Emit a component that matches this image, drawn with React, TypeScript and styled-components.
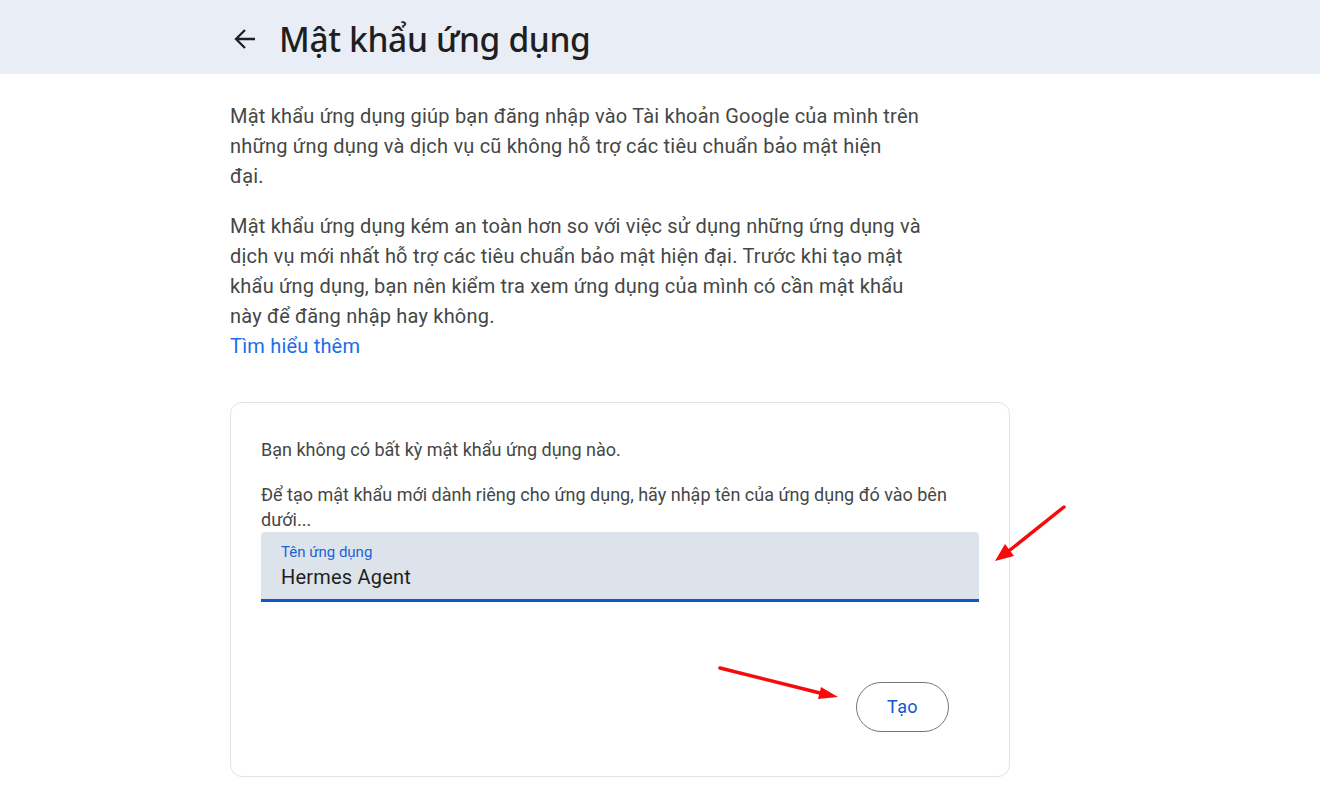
import styled, { createGlobalStyle } from "styled-components";

const GlobalStyle = createGlobalStyle`
  html, body {
    margin: 0;
    padding: 0;
    height: 100%;
    overflow: hidden;
    background: #fff;
    font-family: Roboto, "Liberation Sans", sans-serif;
  }
`;

const App = () => {
  return (
    <Page>
      <GlobalStyle />
      <Header>
        <BackButton aria-label="Quay lại">
          <svg width="30" height="30" viewBox="0 0 30 30" fill="none" stroke="#202124" strokeWidth="2.3">
            <path d="M25 15H7M15 6l-9 9 9 9" />
          </svg>
        </BackButton>
        <Title>Mật khẩu ứng dụng</Title>
      </Header>
      <Main>
        <Paragraph>
          Mật khẩu ứng dụng giúp bạn đăng nhập vào Tài khoản Google của mình trên
          <br />
          những ứng dụng và dịch vụ cũ không hỗ trợ các tiêu chuẩn bảo mật hiện
          <br />
          đại.
        </Paragraph>
        <Paragraph>
          Mật khẩu ứng dụng kém an toàn hơn so với việc sử dụng những ứng dụng và
          <br />
          dịch vụ mới nhất hỗ trợ các tiêu chuẩn bảo mật hiện đại. Trước khi tạo mật
          <br />
          khẩu ứng dụng, bạn nên kiểm tra xem ứng dụng của mình có cần mật khẩu
          <br />
          này để đăng nhập hay không.
          <br />
          <LearnMore href="#">Tìm hiểu thêm</LearnMore>
        </Paragraph>
        <Card>
          <CardText>Bạn không có bất kỳ mật khẩu ứng dụng nào.</CardText>
          <Hint>Để tạo mật khẩu mới dành riêng cho ứng dụng, hãy nhập tên của ứng dụng đó vào bên dưới...</Hint>
          <Field>
            <FieldLabel>Tên ứng dụng</FieldLabel>
            <FieldValue>Hermes Agent</FieldValue>
          </Field>
          <Actions>
            <CreateButton>Tạo</CreateButton>
          </Actions>
        </Card>
      </Main>
      <Annotations width="1320" height="789" viewBox="0 0 1320 789">
        <line x1="1064" y1="507" x2="1010" y2="550" stroke="#f80a0a" strokeWidth="3.5" strokeLinecap="round" />
        <polygon points="995,561 1005,544 1014,556" fill="#f80a0a" />
        <line x1="720" y1="668" x2="820" y2="693" stroke="#f80a0a" strokeWidth="3.5" strokeLinecap="round" />
        <polygon points="838,697 821,687 818,699" fill="#f80a0a" />
      </Annotations>
    </Page>
  );
};

const Page = styled.div`
  position: relative;
  height: 789px;
  overflow: hidden;
`;

const Header = styled.header`
  display: flex;
  align-items: center;
  gap: 19px;
  height: 74px;
  padding: 4px 0 0 230px;
  box-sizing: border-box;
  background: #e8edf6;
`;

const BackButton = styled.div`
  display: flex;
  width: 30px;
  height: 30px;
`;

const Title = styled.h1`
  margin: 0;
  color: #1f1f1f;
  font-family: "Noto Sans", "Open Sans", sans-serif;
  font-size: 33.5px;
  font-weight: 500;
  letter-spacing: -0.35px;
  line-height: 44px;
`;

const Main = styled.main`
  width: 780px;
  margin-left: 230px;
  padding-top: 27px;
`;

const Paragraph = styled.p`
  margin: 0 0 20px;
  color: #444746;
  font-size: 20px;
  letter-spacing: 0.2px;
  line-height: 30px;
  white-space: nowrap;
`;

const LearnMore = styled.a`
  color: #1a6ee6;
  text-decoration: none;
`;

const Card = styled.section`
  box-sizing: border-box;
  height: 375px;
  margin-top: 41px;
  padding: 34px 30px 44px;
  border: 1px solid #e1e3e1;
  border-radius: 12px;
`;

const CardText = styled.p`
  margin: 0 0 20px;
  color: #444746;
  font-size: 18px;
  line-height: 25px;
`;

const Hint = styled(CardText)`
  margin: 0;
`;

const Field = styled.div`
  box-sizing: border-box;
  height: 70px;
  padding: 12px 20px 0;
  background: #dde3ea;
  border-bottom: 3px solid #0b57d0;
  border-radius: 4px 4px 0 0;
`;

const FieldLabel = styled.div`
  color: #1a62d8;
  font-size: 15px;
  line-height: 16px;
`;

const FieldValue = styled.div`
  margin-top: 5px;
  color: #1f1f1f;
  font-size: 20px;
  letter-spacing: 0.2px;
  line-height: 24px;
`;

const Actions = styled.div`
  display: flex;
  justify-content: flex-end;
  margin-top: 80px;
  padding-right: 30px;
`;

const CreateButton = styled.button`
  width: 93px;
  height: 50px;
  padding: 0 0 2px;
  background: #fff;
  border: 1px solid #747775;
  border-radius: 25px;
  color: #0b57d0;
  font-family: inherit;
  font-size: 18px;
  font-weight: 400;
  letter-spacing: 0.4px;
`;

const Annotations = styled.svg`
  position: absolute;
  top: 0;
  left: 0;
  pointer-events: none;
`;

export default App;
